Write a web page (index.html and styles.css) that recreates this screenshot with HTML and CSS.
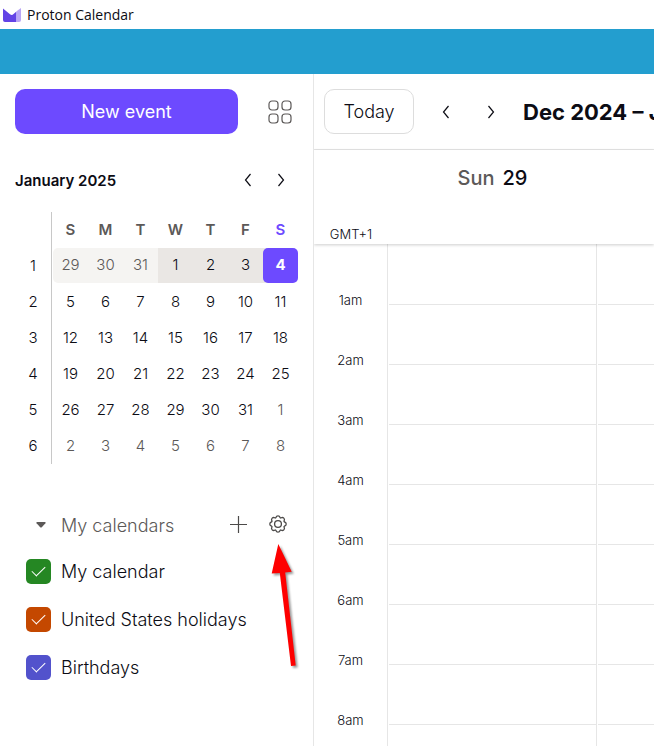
FILE: index.html
```html
<!DOCTYPE html>
<html lang="en">
<head>
    <meta charset="UTF-8">
    <meta name="viewport" content="width=device-width, initial-scale=1.0">
    <title>Proton Calendar</title>
    <link rel="stylesheet" href="styles.css">
</head>
<body>
    <header class="titlebar">
        <svg class="logo" width="18" height="14" viewBox="0 0 18 14" aria-hidden="true">
            <path d="M0 0.5 L7 6.2 Q9 7.8 10.5 6 L13.5 3.5 V14 H2 Q0 14 0 12 Z" fill="#6243e6"/>
            <path d="M13.5 3.2 L18 0 V12 Q18 14 16 14 H13.5 Z" fill="#b9a6f5"/>
        </svg>
        <span>Proton Calendar</span>
    </header>
    <div class="banner"></div>
    <div class="app">
        <aside class="sidebar">
            <div class="sidebar-top">
                <button class="new-event">New event</button>
                <button class="icon-button apps" aria-label="Apps">
                    <svg width="24" height="24" viewBox="0 0 24 24" fill="none" stroke="#5c5958" stroke-width="1.2">
                        <rect x="1" y="1" width="9" height="9" rx="3"/>
                        <rect x="14" y="1" width="9" height="9" rx="3"/>
                        <rect x="1" y="14" width="9" height="9" rx="3"/>
                        <rect x="14" y="14" width="9" height="9" rx="3"/>
                    </svg>
                </button>
            </div>

            <div class="month">
                <h2>January 2025</h2>
                <button class="icon-button" aria-label="Previous month">
                    <svg width="16" height="16" viewBox="0 0 16 16" fill="none" stroke="#0c0c14" stroke-width="1.2"><path d="M9.5 2 L4.5 8 L9.5 14"/></svg>
                </button>
                <button class="icon-button" aria-label="Next month">
                    <svg width="16" height="16" viewBox="0 0 16 16" fill="none" stroke="#0c0c14" stroke-width="1.2"><path d="M4.5 2 L9.5 8 L4.5 14"/></svg>
                </button>
            </div>

            <table class="mini">
                <thead>
                    <tr><td class="week"><span></span></td><th>S</th><th>M</th><th>T</th><th>W</th><th>T</th><th>F</th><th class="current">S</th></tr>
                </thead>
                <tbody>
                    <tr><td class="week"><span>1</span></td><td class="out range first"><span>29</span></td><td class="out range"><span>30</span></td><td class="out range"><span>31</span></td><td class="range"><span>1</span></td><td class="range"><span>2</span></td><td class="range"><span>3</span></td><td class="today range"><span>4</span></td></tr>
                    <tr><td class="week"><span>2</span></td><td>5</td><td>6</td><td>7</td><td>8</td><td>9</td><td>10</td><td>11</td></tr>
                    <tr><td class="week"><span>3</span></td><td>12</td><td>13</td><td>14</td><td>15</td><td>16</td><td>17</td><td>18</td></tr>
                    <tr><td class="week"><span>4</span></td><td>19</td><td>20</td><td>21</td><td>22</td><td>23</td><td>24</td><td>25</td></tr>
                    <tr><td class="week"><span>5</span></td><td>26</td><td>27</td><td>28</td><td>29</td><td>30</td><td>31</td><td class="out">1</td></tr>
                    <tr><td class="week"><span>6</span></td><td class="out">2</td><td class="out">3</td><td class="out">4</td><td class="out">5</td><td class="out">6</td><td class="out">7</td><td class="out">8</td></tr>
                </tbody>
            </table>

            <section class="calendars">
                <div class="calendars-head">
                    <button class="toggle">
                        <svg width="10" height="6" viewBox="0 0 10 6" aria-hidden="true"><path d="M0.8 0 H9.2 Q10 0.4 9.4 1.2 L5.8 5.2 Q5 6 4.2 5.2 L0.6 1.2 Q0 0.4 0.8 0 Z" fill="#5c5958"/></svg>
                        My calendars
                    </button>
                    <button class="icon-button" aria-label="Add calendar">
                        <svg width="20" height="20" viewBox="0 0 20 20" stroke="#4c4a49" stroke-width="1.2"><path d="M10.5 1 V18 M2 9.5 H19"/></svg>
                    </button>
                    <button class="icon-button" aria-label="Settings">
                        <svg width="20" height="20" viewBox="0 0 20 20" fill="none" stroke="#4c4a49" stroke-width="1.3" stroke-linejoin="round">
                            <path d="M8 2.4 Q8.4 0.9 10 0.9 Q11.6 0.9 12 2.4 Q12.4 3.3 13.3 2.8 Q14.7 2 15.8 3.1 Q16.9 4.2 16.2 5.6 Q15.7 6.6 16.6 7 Q18.2 7.4 18.2 9 Q18.2 10.6 16.6 11 Q15.7 11.4 16.2 12.4 Q16.9 13.8 15.8 14.9 Q14.7 16 13.3 15.2 Q12.4 14.7 12 15.6 Q11.6 17.1 10 17.1 Q8.4 17.1 8 15.6 Q7.6 14.7 6.7 15.2 Q5.3 16 4.2 14.9 Q3.1 13.8 3.8 12.4 Q4.3 11.4 3.4 11 Q1.8 10.6 1.8 9 Q1.8 7.4 3.4 7 Q4.3 6.6 3.8 5.6 Q3.1 4.2 4.2 3.1 Q5.3 2 6.7 2.8 Q7.6 3.3 8 2.4 Z"/>
                            <circle cx="10" cy="9" r="3.4"/>
                        </svg>
                    </button>
                </div>
                <label class="calendar"><input type="checkbox" class="green" checked>My calendar</label>
                <label class="calendar"><input type="checkbox" class="orange" checked>United States holidays</label>
                <label class="calendar"><input type="checkbox" class="violet" checked>Birthdays</label>

                <svg class="arrow" width="32" height="130" viewBox="0 0 32 130" aria-hidden="true">
                    <path d="M10.3 1 L23.7 28.7 L17.2 29.4 L27.7 122.6 L23 123.1 L11.8 30 L3.7 30.5 Z" fill="#fe0000"/>
                </svg>
            </section>
        </aside>

        <main class="main">
            <div class="toolbar">
                <button class="today-button">Today</button>
                <button class="icon-button nav" aria-label="Previous week">
                    <svg width="16" height="16" viewBox="0 0 16 16" fill="none" stroke="#0c0c14" stroke-width="1.2"><path d="M9.5 2 L4.5 8 L9.5 14"/></svg>
                </button>
                <button class="icon-button nav" aria-label="Next week">
                    <svg width="16" height="16" viewBox="0 0 16 16" fill="none" stroke="#0c0c14" stroke-width="1.2"><path d="M4.5 2 L9.5 8 L4.5 14"/></svg>
                </button>
                <h1>Dec 2024 – Jan 2025</h1>
            </div>
            <div class="week-grid week-head">
                <div class="zone">GMT+1</div>
                <div class="day-name"><span>Sun</span><b>29</b></div>
            </div>
            <div class="week-grid week-body">
                <div class="hours">
                    <div>1am</div>
                    <div>2am</div>
                    <div>3am</div>
                    <div>4am</div>
                    <div>5am</div>
                    <div>6am</div>
                    <div>7am</div>
                    <div>8am</div>
                </div>
                <div class="day"></div>
                <div class="day"></div>
            </div>
        </main>
    </div>
</body>
</html>
```
FILE: styles.css
```css
* {
    box-sizing: border-box;
}
body {
    margin: 0;
    height: 100vh;
    display: flex;
    flex-direction: column;
    overflow: hidden;
    background: white;
    color: #0c0c14;
    font-family: Inter, sans-serif;
    font-size: 15px;
    font-weight: 300;
}
button {
    font: inherit;
    color: inherit;
    background: none;
    border: none;
    padding: 0;
    cursor: pointer;
}
h1, h2 {
    margin: 0;
}
svg {
    display: block;
}
.titlebar {
    display: flex;
    flex: none;
    align-items: center;
    gap: 6px;
    height: 29px;
    padding-left: 3px;
    font-family: "Open Sans", sans-serif;
    font-size: 14px;
    font-weight: 400;
}
.banner {
    flex: none;
    height: 45px;
    background: #239ecf;
}
.app {
    display: flex;
    flex: 1;
    min-height: 0;
}
.icon-button {
    display: flex;
    align-items: center;
    justify-content: center;
}

/* Sidebar */
.sidebar {
    flex: none;
    width: 314px;
    padding: 15px 15px 0;
    border-right: 1px solid #e6e6e6;
}
.sidebar-top {
    display: flex;
    gap: 24px;
}
.new-event {
    flex: 1;
    height: 45px;
    border-radius: 10px;
    background: #6d4aff;
    color: white;
    font-size: 18px;
    font-weight: 400;
}
.apps {
    width: 36px;
}
.month {
    display: flex;
    align-items: center;
    height: 32px;
    margin-top: 30px;
}
.month h2 {
    flex: 1;
    font-size: 15px;
    font-weight: 600;
}
.month .icon-button {
    width: 33px;
    height: 32px;
}
.mini {
    width: 100%;
    margin-top: 16px;
    table-layout: fixed;
    border-collapse: collapse;
    text-align: center;
}
.mini th, .mini td {
    height: 36px;
    padding: 0 0 2px;
}
.mini th {
    color: #5c5958;
    font-weight: 600;
}
.mini .current {
    color: #6d4aff;
}
.mini .week {
    width: 38px;
    padding: 0;
}
.week span {
    display: block;
    height: 36px;
    margin-right: 1px;
    border-right: 1px solid #c8c8c8;
    line-height: 35px;
}
.mini .out {
    color: #5c5958;
}
.mini .range {
    padding: 0;
    vertical-align: top;
}
.range span {
    display: block;
    height: 35px;
    background: #eae7e4;
    line-height: 34px;
}
.out.range span {
    background: #f5f4f2;
}
.first span {
    border-radius: 5px 0 0 5px;
}
.today.range {
    background: linear-gradient(#eae7e4, #eae7e4) no-repeat 0 0 / 8px 35px;
}
.today.range span {
    border-radius: 5px;
    background: #6d4aff;
    color: white;
    font-weight: 700;
}
.calendars {
    position: relative;
    margin-top: 39px;
    font-size: 18px;
}
.calendars-head {
    display: flex;
    align-items: center;
    height: 44px;
    padding-left: 21px;
}
.toggle {
    display: flex;
    flex: 1;
    align-items: center;
    gap: 15px;
    color: #5c5958;
}
.calendars-head .icon-button {
    width: 40px;
    height: 40px;
}
.calendar {
    display: flex;
    align-items: center;
    gap: 10px;
    height: 48px;
    padding-left: 11px;
}
.calendar input {
    appearance: none;
    display: grid;
    place-items: center;
    width: 25px;
    height: 25px;
    margin: 0;
    border-radius: 5px;
}
.calendar input:checked::before {
    content: "";
    width: 12px;
    height: 6px;
    margin-bottom: 3px;
    border: solid white;
    border-width: 0 0 1px 1px;
    transform: rotate(-45deg);
}
.green {
    background: #258723;
}
.orange {
    background: #c44800;
}
.violet {
    background: #5252cc;
}
.arrow {
    position: absolute;
    top: 40px;
    right: -2px;
    filter: drop-shadow(2px 2px 1px rgba(0, 0, 0, 0.4));
    pointer-events: none;
}

/* Week view */
.main {
    display: flex;
    flex: 1;
    flex-direction: column;
    min-width: 0;
    overflow: hidden;
}
.toolbar {
    display: flex;
    flex: none;
    align-items: center;
    height: 76px;
    padding-left: 10px;
    border-bottom: 1px solid #e6e6e6;
}
.today-button {
    flex: none;
    width: 90px;
    height: 45px;
    margin-right: 10px;
    border: 1px solid #dddddd;
    border-radius: 10px;
    font-size: 18px;
}
.nav {
    flex: none;
    width: 45px;
    height: 45px;
}
.toolbar h1 {
    margin-left: 9px;
    font-size: 22px;
    font-weight: 700;
    white-space: nowrap;
}
.week-grid {
    display: grid;
    grid-template-columns: 74px repeat(2, minmax(209px, 1fr));
}
.week-head {
    position: relative;
    flex: none;
    height: 94px;
    box-shadow: 0 1px 3px rgba(0, 0, 0, 0.2);
}
.zone {
    align-self: end;
    padding-bottom: 2px;
    font-size: 13px;
    line-height: 16px;
    text-align: center;
}
.day-name {
    display: flex;
    justify-content: center;
    gap: 8px;
    padding-top: 16px;
    font-size: 20px;
    font-weight: 500;
    line-height: 24px;
}
.day-name span {
    color: #5c5958;
}
.day-name b {
    font-weight: 500;
}
.week-body {
    flex: 1;
    min-height: 0;
}
.hours {
    padding-top: 48px;
    border-right: 1px solid #e6e6e6;
    font-size: 13px;
    line-height: 16px;
    text-align: center;
}
.hours div {
    height: 60px;
}
.day {
    padding-left: 1px;
    border-right: 1px solid #e6e6e6;
    background: repeating-linear-gradient(transparent 0 59px, #e6e6e6 59px 60px) 0 1px content-box;
}
```
